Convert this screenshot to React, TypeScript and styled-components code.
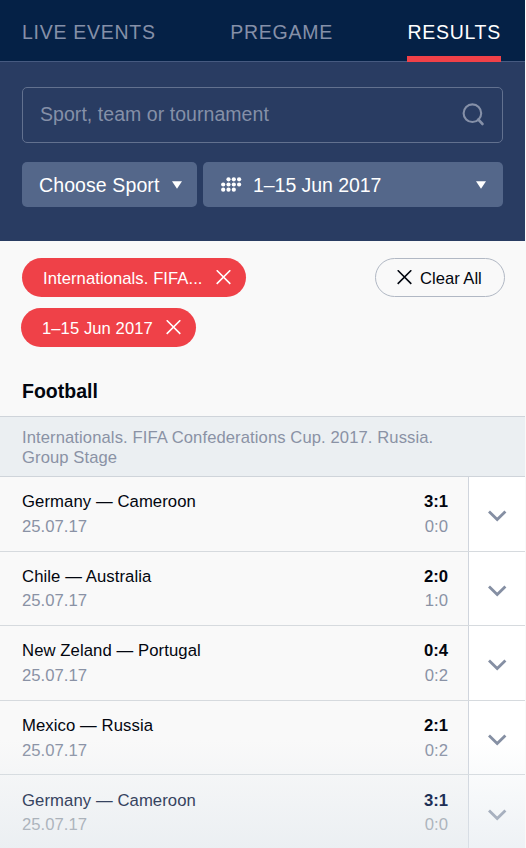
import React from "react";
import styled, { createGlobalStyle } from "styled-components";

const GlobalStyle = createGlobalStyle`
  *, *::before, *::after { box-sizing: border-box; }
  body {
    margin: 0;
    background: #f9f9f9;
    font-family: "Liberation Sans", Arial, sans-serif;
    overflow: hidden;
  }
  button, input { font: inherit; letter-spacing: inherit; }
`;

const Screen = styled.main`
  position: relative;
  width: 525px;
  height: 848px;
  overflow: hidden;
  background: #f9f9f9;
  color: #02060f;
`;

const Tabs = styled.nav`
  display: flex;
  justify-content: space-between;
  height: 62px;
  padding: 0 24px 0 22px;
  background: #052146;
  border-bottom: 1px solid #465a80;
`;

const Tab = styled.a<{ $active?: boolean }>`
  height: 62px;
  padding-top: 3px;
  line-height: 59px;
  font-size: 19.5px;
  letter-spacing: 0.73px;
  color: ${(p) => (p.$active ? "#fff" : "#8590a8")};
  border-bottom: 6px solid ${(p) => (p.$active ? "#f04148" : "transparent")};
`;

const Filters = styled.section`
  height: 179px;
  padding: 25px 22px 0;
  background: #293c62;
`;

const SearchBox = styled.label`
  display: flex;
  align-items: center;
  justify-content: space-between;
  height: 56px;
  padding: 0 16px 0 17px;
  border: 1.5px solid #62718f;
  border-radius: 5px;
`;

const SearchInput = styled.input`
  flex: 1;
  min-width: 0;
  padding: 0 0 2px;
  border: 0;
  outline: 0;
  background: transparent;
  color: #fff;
  font-size: 19.5px;
  letter-spacing: 0.05px;
  &::placeholder { color: #8590a8; opacity: 1; }
`;

const Selects = styled.div`
  display: grid;
  grid-template-columns: 175px 1fr;
  gap: 6px;
  margin-top: 19px;
`;

const Select = styled.button<{ $wide?: boolean }>`
  display: flex;
  align-items: center;
  height: 45px;
  padding: 0 ${(p) => (p.$wide ? "17px 0 18px" : "15px 0 17px")};
  border: 0;
  border-radius: 5px;
  background: #54678a;
  color: #fff;
  font-size: 19.5px;
`;

const SelectLabel = styled.span<{ $spacing?: number }>`
  flex: 1;
  padding-top: 2px;
  text-align: left;
  white-space: nowrap;
  letter-spacing: ${(p) => p.$spacing ?? 0}px;
`;

const ChipBar = styled.section`
  display: flex;
  justify-content: space-between;
  align-items: flex-start;
  height: 126px;
  padding: 17px 20px 0 21px;
`;

const Chips = styled.div`
  display: flex;
  flex-direction: column;
  align-items: flex-start;
  gap: 11px;
`;

const PillText = styled.span`
  padding-top: 2px;
`;

const Chip = styled.button<{ $inset?: boolean }>`
  display: flex;
  align-items: center;
  gap: 13px;
  height: 39px;
  margin-left: ${(p) => (p.$inset ? "1px" : "0")};
  padding: 0 15px 0 21px;
  border: 0;
  border-radius: 20px;
  background: #ef4148;
  color: #fff;
  font-size: 16.6px;
  letter-spacing: 0.08px;
  white-space: nowrap;
`;

const ClearButton = styled.button`
  display: flex;
  align-items: center;
  gap: 8px;
  width: 130px;
  height: 39px;
  padding: 0 0 0 21px;
  border: 1.4px solid #b1b8c4;
  border-radius: 20px;
  background: transparent;
  color: #02060f;
  font-size: 16.6px;
  white-space: nowrap;
`;

const SportTitle = styled.h2`
  height: 49px;
  margin: 0;
  padding-left: 22px;
  line-height: 49px;
  font-size: 19.5px;
`;

const League = styled.h3`
  height: 61px;
  margin: 0;
  padding: 11px 22px 0;
  border: solid #cfd4da;
  border-width: 1px 0;
  background: #ebeff2;
  color: #8a92a5;
  font-size: 16.6px;
  font-weight: 400;
  line-height: 20px;
  letter-spacing: 0.1px;
`;

const Match = styled.article`
  display: grid;
  grid-template-columns: 1fr 57px;
  height: 74.6px;
  border-bottom: 1.5px solid #d6dade;
`;

const MatchInfo = styled.div`
  display: flex;
  justify-content: space-between;
  padding: 13.3px 20px 0 22px;
  font-size: 16.7px;
  line-height: 24.5px;
`;

const Column = styled.div<{ $end?: boolean }>`
  text-align: ${(p) => (p.$end ? "right" : "left")};
`;

const Primary = styled.div<{ $bold?: boolean; $faded?: boolean }>`
  position: relative;
  z-index: ${(p) => (p.$faded ? 1 : "auto")};
  font-weight: ${(p) => (p.$bold ? 700 : 400)};
  letter-spacing: ${(p) => (p.$bold ? 0 : 0.08)}px;
  color: ${(p) => (p.$faded ? (p.$bold ? "#1d2f56" : "#36435f") : "#02060f")};
`;

const Secondary = styled.div<{ $faded?: boolean }>`
  color: ${(p) => (p.$faded ? "#878e98" : "#8a92a5")};
`;

const Expand = styled.button`
  display: flex;
  align-items: center;
  justify-content: center;
  padding: 5px 0 0;
  border: 0;
  border-left: 1.5px solid #d0d5dd;
  background: #fff;
  color: #858fa3;
`;

const BottomFade = styled.div`
  position: absolute;
  inset: auto 0 0;
  height: 108px;
  background: linear-gradient(rgba(224, 231, 237, 0), rgba(224, 231, 237, 0.55));
  pointer-events: none;
`;

const SearchIcon = () => (
  <svg width="24" height="24" viewBox="0 0 24 24" fill="none" stroke="#8590a8">
    <circle cx="10.4" cy="10.2" r="8.8" strokeWidth="2.1" />
    <path d="M16.4 16.6l4 4.3" strokeWidth="2.8" strokeLinecap="round" />
  </svg>
);

const Caret = () => (
  <svg width="10" height="8" viewBox="0 0 10 8" fill="currentColor">
    <path d="M0 0.2h10L5 7.8z" />
  </svg>
);

const Cross = () => (
  <svg width="15" height="15" viewBox="0 0 15 15" fill="none" stroke="currentColor" strokeWidth="1.6">
    <path d="M0.7 0.3l13.6 13.6M14.3 0.3L0.7 13.9" />
  </svg>
);

const Chevron = () => (
  <svg width="19" height="12" viewBox="0 0 19 12" fill="none" stroke="currentColor" strokeWidth="2.8">
    <path d="M1 1.4l8.2 8.1 8.2-8.1" />
  </svg>
);

const calendarDots: number[][] = [
  [1, 2, 3],
  [0, 1, 2, 3],
  [0, 1, 2],
];

const CalendarIcon = styled.svg`
  width: 21px;
  height: 15px;
  margin-right: 11px;
`;

const CalendarDots = () => (
  <CalendarIcon viewBox="0 0 21 15" fill="currentColor">
    {calendarDots.map((row, y) =>
      row.map((x) => <circle key={`${x}-${y}`} cx={2.2 + x * 5.3} cy={2.3 + y * 5.2} r="2.1" />)
    )}
  </CalendarIcon>
);

const matches = [
  { teams: "Germany — Cameroon", score: "3:1", half: "0:0" },
  { teams: "Chile — Australia", score: "2:0", half: "1:0" },
  { teams: "New Zeland — Portugal", score: "0:4", half: "0:2" },
  { teams: "Mexico — Russia", score: "2:1", half: "0:2" },
  { teams: "Germany — Cameroon", score: "3:1", half: "0:0", faded: true },
];

export default function App() {
  return (
    <>
      <GlobalStyle />
      <Screen>
        <Tabs>
          <Tab>LIVE EVENTS</Tab>
          <Tab>PREGAME</Tab>
          <Tab $active>RESULTS</Tab>
        </Tabs>
        <Filters>
          <SearchBox>
            <SearchInput placeholder="Sport, team or tournament" />
            <SearchIcon />
          </SearchBox>
          <Selects>
            <Select>
              <SelectLabel $spacing={0.1}>Choose Sport</SelectLabel>
              <Caret />
            </Select>
            <Select $wide>
              <CalendarDots />
              <SelectLabel $spacing={-0.05}>1–15 Jun 2017</SelectLabel>
              <Caret />
            </Select>
          </Selects>
        </Filters>
        <ChipBar>
          <Chips>
            <Chip $inset><PillText>Internationals. FIFA...</PillText><Cross /></Chip>
            <Chip><PillText>1–15 Jun 2017</PillText><Cross /></Chip>
          </Chips>
          <ClearButton><Cross /><PillText>Clear All</PillText></ClearButton>
        </ChipBar>
        <SportTitle>Football</SportTitle>
        <League>
          Internationals. FIFA Confederations Cup. 2017. Russia.
          <br />
          Group Stage
        </League>
        {matches.map((m, i) => (
          <Match key={i}>
            <MatchInfo>
              <Column>
                <Primary $faded={m.faded}>{m.teams}</Primary>
                <Secondary $faded={m.faded}>25.07.17</Secondary>
              </Column>
              <Column $end>
                <Primary $bold $faded={m.faded}>{m.score}</Primary>
                <Secondary $faded={m.faded}>{m.half}</Secondary>
              </Column>
            </MatchInfo>
            <Expand aria-label="Show details"><Chevron /></Expand>
          </Match>
        ))}
        <BottomFade />
      </Screen>
    </>
  );
}
